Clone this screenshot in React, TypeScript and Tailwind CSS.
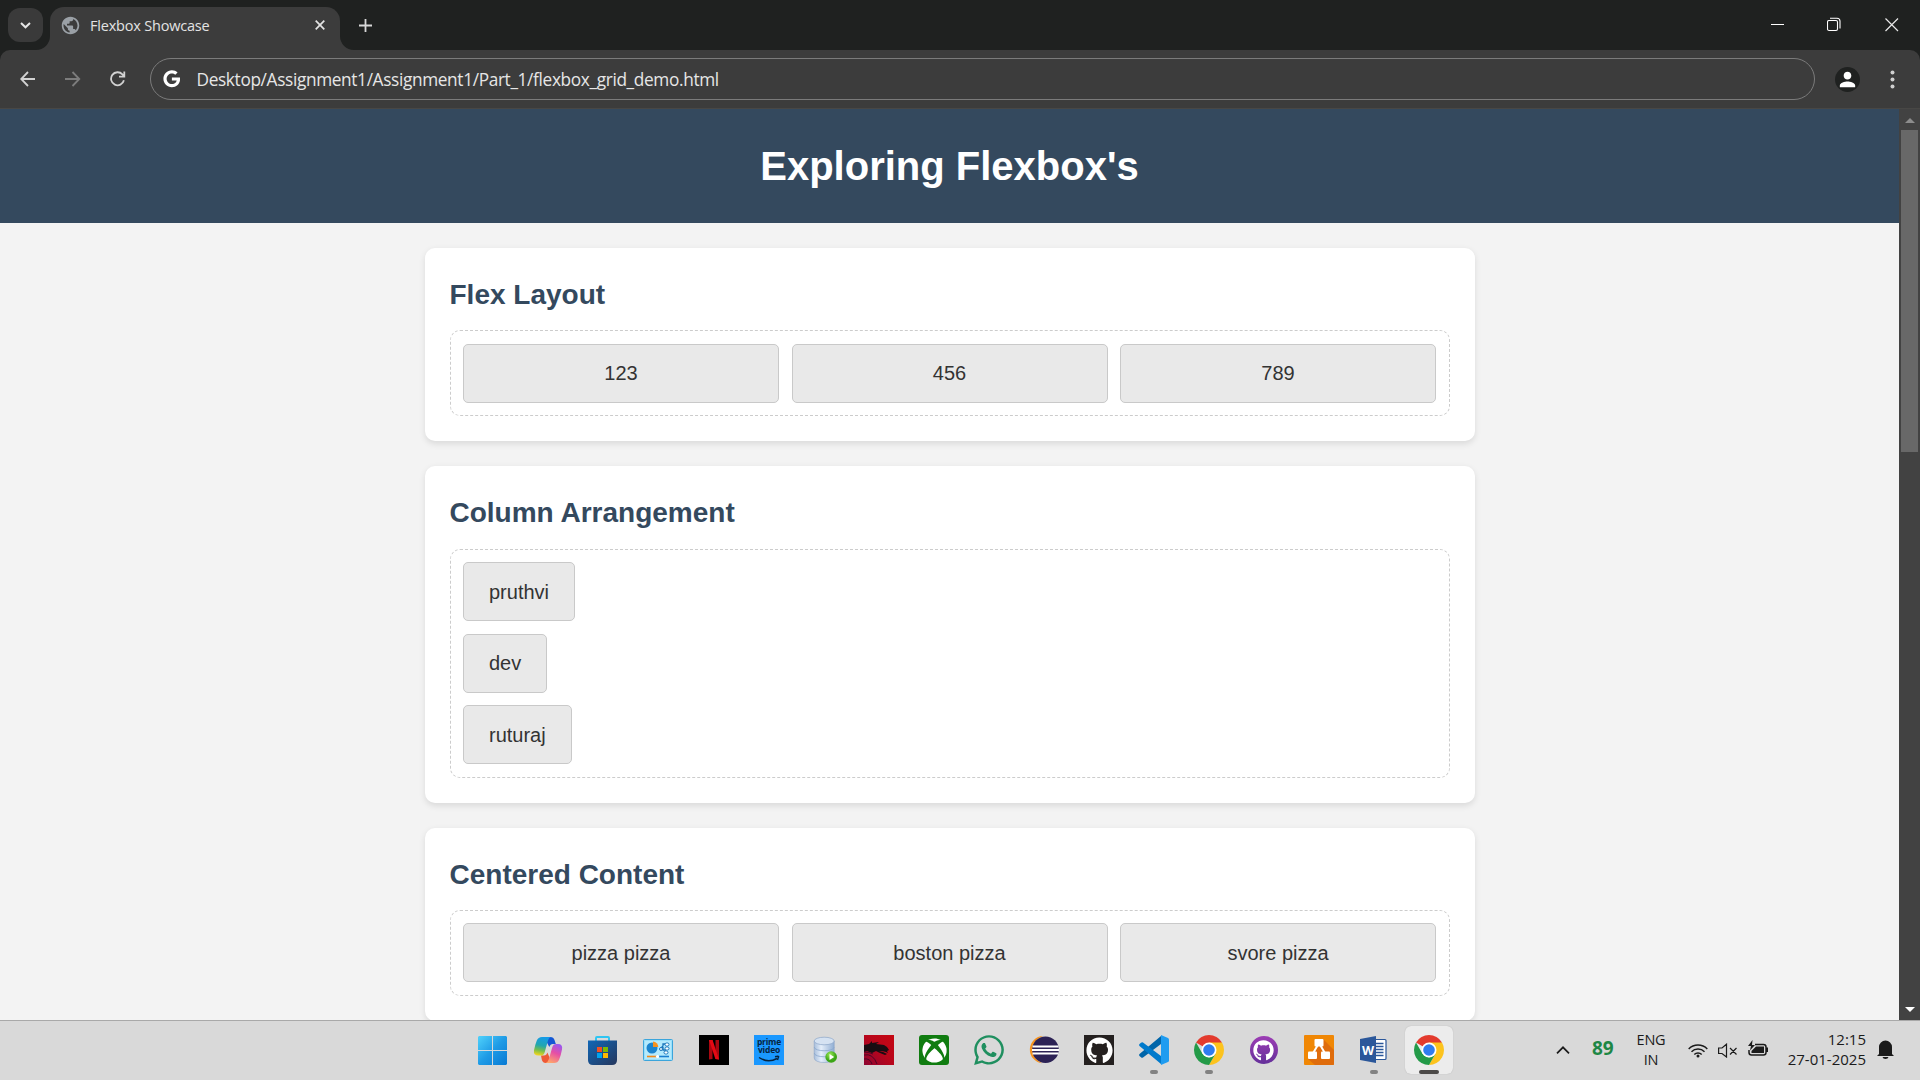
import type { ReactNode } from "react";
import { MdPublic, MdPerson } from "react-icons/md";
import { FaGoogle, FaGithub, FaXbox, FaWhatsapp } from "react-icons/fa";

const ui = "font-['Open_Sans','Noto_Sans',sans-serif]";

function TitleBar() {
  return (
    <div className="flex h-[50px] items-start bg-[#1f2120]">
      <div className="mt-2 ml-2 flex h-[34px] w-[35px] items-center justify-center rounded-xl bg-[#3a3a3a]">
        <svg width="11" height="7" viewBox="0 0 11 7" fill="none" stroke="#e6e6e6" strokeWidth="2">
          <path d="M1 1l4.5 4.3L10 1" />
        </svg>
      </div>
      <div className={`relative mt-[7px] ml-[7px] flex h-[43px] w-[290px] items-center rounded-t-[14px] bg-[#3c3c3c] pb-[7px] pl-[11px] text-[#e3e3e3] ${ui}`}>
        <svg className="absolute bottom-0 -left-[14px]" width="14" height="14">
          <path d="M14 0A14 14 0 0 1 0 14H14Z" fill="#3c3c3c" />
        </svg>
        <svg className="absolute -right-[14px] bottom-0" width="14" height="14">
          <path d="M0 0A14 14 0 0 0 14 14H0Z" fill="#3c3c3c" />
        </svg>
        <MdPublic size={21} color="#9aa0a6" className="-ml-[1.5px]" />
        <span className="mt-[2px] ml-[9.5px] w-[224.5px] text-[14.5px] leading-5 tracking-[-0.2px] whitespace-nowrap">Flexbox Showcase</span>
        <svg width="10" height="10" viewBox="0 0 10 10" stroke="#e3e3e3" strokeWidth="1.7">
          <path d="M.7.7l8.6 8.6M9.3.7L.7 9.3" />
        </svg>
      </div>
      <svg className="mt-[19px] ml-[19px]" width="13" height="13" stroke="#d8d8d8" strokeWidth="1.8">
        <path d="M6.5 0V13M0 6.5H13" />
      </svg>
      <div className="mt-[17px] mr-[21px] ml-auto flex items-center">
        <svg width="14" height="15" stroke="#fff">
          <path d="M0 7.5H13" />
        </svg>
        <svg className="ml-[42px]" width="14" height="15" fill="none" stroke="#fff" strokeWidth="1.1">
          <rect x=".5" y="3.5" width="10" height="10" rx="1.5" />
          <path d="M3 1.2H10a3 3 0 0 1 3 3V11.5" />
        </svg>
        <svg className="ml-[44px]" width="14" height="15" stroke="#e8e8e8" strokeWidth="1.2">
          <path d="M.5 1.5l12.5 12.5M13 1.5L.5 14" />
        </svg>
      </div>
    </div>
  );
}

function Toolbar() {
  return (
    <div className="bg-[#1f2120]">
      <div className="flex h-[59px] items-center rounded-t-[10px] border-b border-[#484745] bg-[#3c3c3c] pr-[25px] pl-5">
        <svg width="16" height="16" viewBox="0 0 16 16" fill="none" stroke="#d2d2d2" strokeWidth="1.8">
          <path d="M15 8H1.5M8 1L1.2 8 8 15" />
        </svg>
        <svg className="ml-[29px]" width="16" height="16" viewBox="0 0 16 16" fill="none" stroke="#7c7c7c" strokeWidth="1.8">
          <path d="M0 8h13.5M7.500 1l6.800 7-6.800 7" />
        </svg>
        <svg className="ml-[29px]" width="16" height="16" viewBox="0 0 16 16" fill="none" stroke="#d2d2d2" strokeWidth="1.8">
          <path d="M13.900 9.300A6.500 6.500 0 1 1 12.400 3.400L14.300 5.500M14.300.5V5.700H9" />
        </svg>
        <div className={`ml-6 flex h-[42px] w-[1665px] items-center rounded-full border border-[#7b7b7b] pl-3 text-[#e6e6e6] ${ui}`}>
          <FaGoogle size={17.500} color="#fff" className="-ml-[0.5px]" />
          <span className="mt-[2px] ml-[16.5px] text-[17.25px] leading-6 tracking-[-0.35px] whitespace-nowrap">
            Desktop/Assignment1/Assignment1/Part_1/flexbox_grid_demo.html
          </span>
        </div>
        <div className="ml-5 flex size-[25px] items-center justify-center rounded-full bg-[#1f2120]">
          <MdPerson size={23} color="#fff" className="shrink-0" />
        </div>
        <svg className="ml-auto" width="5" height="19" fill="#d0d0d0">
          <circle cx="2.500" cy="2.500" r="2" />
          <circle cx="2.500" cy="9.500" r="2" />
          <circle cx="2.500" cy="16.500" r="2" />
        </svg>
      </div>
    </div>
  );
}

function Card({ title, children }: { title: string; children: ReactNode }) {
  return (
    <section className="mx-auto mt-[25px] w-[1050px] rounded-[10px] bg-white p-[25px] shadow-[0_2.5px_6px_rgba(0,0,0,0.1)]">
      <h2 className="mb-[12.5px] text-[28px] leading-[44.8px] font-bold text-[#34495e]">{title}</h2>
      {children}
    </section>
  );
}

const box = "rounded-[5px] border border-[#c9c9c9] bg-[#e9e9e9] px-[25px] py-[12.5px] leading-8";

function Row({ items }: { items: string[] }) {
  return (
    <div className="flex gap-[12.5px] rounded-[10px] border border-dashed border-[#ccc] p-[12.5px]">
      {items.map((t) => (
        <div key={t} className={`flex-1 text-center ${box}`}>{t}</div>
      ))}
    </div>
  );
}

function Column({ items }: { items: string[] }) {
  return (
    <div className="flex flex-col items-start gap-[12.5px] rounded-[10px] border border-dashed border-[#ccc] p-[12.5px]">
      {items.map((t) => (
        <div key={t} className={box}>{t}</div>
      ))}
    </div>
  );
}

function Scrollbar() {
  return (
    <div className="flex h-full w-[21px] flex-col items-center bg-[#424242]">
      <svg className="mt-[9px]" width="10" height="5" fill="#8c8c8c"><path d="M5 0l5 5H0Z" /></svg>
      <div className="mt-[7px] h-[322px] w-[17px] bg-[#686868]" />
      <svg className="mt-auto mb-2" width="10" height="5" fill="#fff"><path d="M0 0H10L5 5Z" /></svg>
    </div>
  );
}

function Svg({ children }: { children: ReactNode }) {
  return <svg width="30" height="30" viewBox="0 0 30 30" className="overflow-visible">{children}</svg>;
}

const WindowsIcon = () => (
  <Svg>
    <defs>
      <linearGradient id="win" gradientUnits="userSpaceOnUse" x1="-1" y1="1" x2="28" y2="30">
        <stop stopColor="#50d2fb" /><stop offset=".5" stopColor="#1f9be6" /><stop offset="1" stopColor="#0879d3" />
      </linearGradient>
    </defs>
    <path fill="url(#win)" d="M0 1H13V15H-1V2ZM14 1H27L28 2V15H14ZM-1 16H13V30H0L-1 29ZM14 16H28V29L27 30H14Z" />
  </Svg>
);

const CopilotIcon = () => (
  <Svg>
    <defs>
      <linearGradient id="cpa" x1=".5" y1="0" x2=".3" y2="1">
        <stop stopColor="#169be8" /><stop offset=".45" stopColor="#21a6b0" /><stop offset=".72" stopColor="#75bd4d" /><stop offset="1" stopColor="#f5d51c" />
      </linearGradient>
      <linearGradient id="cpb" x1=".7" y1="0" x2=".3" y2="1">
        <stop stopColor="#9b58ee" /><stop offset=".45" stopColor="#e64fa5" /><stop offset="1" stopColor="#ffa76b" />
      </linearGradient>
    </defs>
    <path fill="#1557d4" d="M10 2h6.500q3 0 4 3l1.300 4h-3q-2.500 0-3.500 3Z" />
    <path fill="#ee5936" d="M18 28h-6.500q-2.600 0-3.600-3L7 20.500h3q2.500 0 3.400-3Z" />
    <path fill="url(#cpa)" d="M8 2h9q-2.200.5-3 3.400l-3.400 12Q9.700 20.500 7 20.500H4.500Q-.8 20.500 0 15.300 1 10 2.800 5.500 4.200 2 8 2Z" />
    <path fill="url(#cpb)" d="M20 28h-8.500q2.500-.8 3.400-4l3.300-11.600Q19.200 9 22 9h2q5 0 4 5.500-1 5.500-2.800 10Q23.800 28 20 28Z" />
  </Svg>
);

const StoreIcon = () => (
  <Svg>
    <defs>
      <linearGradient id="st" x1="0" y1="0" x2="1" y2="1"><stop stopColor="#1067b6" /><stop offset="1" stopColor="#26375d" /></linearGradient>
    </defs>
    <path fill="none" stroke="#2fc5f2" strokeWidth="2" d="M7 6V3q0-1 1-1H19q1 0 1 1V6" />
    <path fill="url(#st)" d="M-1 5.500H28V25q0 5-5 5H4q-5 0-5-5Z" />
    <path fill="#f25022" d="M8 12h5v5H8z" /><path fill="#7fba00" d="M14 12h5v5h-5z" />
    <path fill="#00a4ef" d="M8 18h5v5H8z" /><path fill="#ffb900" d="M14 18h5v5h-5z" />
  </Svg>
);

const ControlPanelIcon = () => (
  <Svg>
    <rect x="-.5" y="4.500" width="29" height="21" rx="1" fill="#9ae0fb" stroke="#3ca5db" />
    <rect x="1" y="6" width="26" height="18" fill="#b4eafd" />
    <circle cx="8" cy="13" r="5.500" fill="#1a84cf" />
    <path d="M9 12V6.500A5.500 5.500 0 0 1 14.300 12Z" fill="#f6921e" />
    <path d="M16 14l3-3v-2h3M19 12v3h3" stroke="#1975bb" fill="none" strokeWidth="1.300" />
    <g fill="#fff" stroke="#1975bb"><circle cx="17" cy="14" r="1.500" /><rect x="21" y="8" width="4" height="3" rx="1.500" /><rect x="21" y="12" width="4" height="3" rx="1.500" /><rect x="20" y="16" width="4" height="3" rx="1.500" /></g>
    <path d="M3 21.500H13" stroke="#f28a1b" strokeWidth="1.600" /><path d="M15 21.500H25" stroke="#1a7fd0" strokeWidth="1.600" />
    <circle cx="13.500" cy="21.500" r="1.600" fill="#fff" />
  </Svg>
);

const NetflixIcon = () => (
  <Svg>
    <path fill="#000" d="M0 0h30v30H0z" />
    <path fill="#a80710" d="M10 5h3.500v19L10 24.500ZM16.500 5H20v19.500l-3.500-.5Z" />
    <path fill="#e50914" d="M10 5h3.600L20 24.500l-3.600-.5Z" />
  </Svg>
);

const PrimeIcon = () => (
  <div className="flex size-[30px] flex-col items-center bg-[#1a98ff] pt-[3px] font-['Open_Sans'] text-[8.500px] leading-[8px] font-bold tracking-[-0.2px] text-[#06243f]">
    <span>prime</span>
    <span>video</span>
    <svg className="mt-px" width="22" height="7" viewBox="0 0 22 7" fill="none" stroke="#06243f" strokeWidth="1.500">
      <path d="M1 2.500Q10 8.500 19 3.500M17 1.800q4-1 3.500.2T19.500 5" />
    </svg>
  </div>
);

const DatabaseIcon = () => (
  <Svg>
    <defs>
      <linearGradient id="db"><stop stopColor="#a9bfdc" /><stop offset=".35" stopColor="#e4eefa" /><stop offset="1" stopColor="#91aed3" /></linearGradient>
      <radialGradient id="pl" cx=".4" cy=".3"><stop stopColor="#9bea57" /><stop offset="1" stopColor="#3ba516" /></radialGradient>
    </defs>
    <g transform="translate(.7 0)">
      <path fill="url(#db)" stroke="#8ba5c7" strokeWidth=".6" d="M4.500 6v17c0 6 20 6 20 0V6" />
      <path fill="none" stroke="#8aa7cd" strokeWidth=".8" d="M4.500 12c0 5 20 5 20 0M4.500 18c0 5 20 5 20 0" />
      <ellipse cx="14.500" cy="6" rx="10" ry="3.800" fill="#d5e2f2" stroke="#8ba5c7" strokeWidth=".7" />
      <circle cx="21.500" cy="22" r="5.800" fill="url(#pl)" /><path d="M19.800 19v6l4.700-3Z" fill="#fff" />
    </g>
  </Svg>
);

const DragonIcon = () => (
  <Svg>
    <defs>
      <linearGradient id="dr" x1="0" y1="1" x2="1" y2="0"><stop stopColor="#8d0532" /><stop offset=".5" stopColor="#b8061c" /><stop offset="1" stopColor="#c50712" /></linearGradient>
    </defs>
    <path fill="url(#dr)" d="M0 0h30v30H0z" />
    <path fill="#180d12" d="M0 10l5-1 3-3 0 2 7-1-3 2 8 1 3 2 2 3-2 1 1 2-2-1-4-1-3 0 4 1 4 2-2 1-5-2-4-2-4 2-5-2-3 1Z" />
    <path fill="none" stroke="#4c0625" d="M0 20q9-2 13 9M0 24q6-1 8 5M0 17q5 0 9 2" />
  </Svg>
);

const XboxIcon = () => (
  <div className="flex size-[30px] items-center justify-center rounded-[3px] bg-[#107c10]">
    <FaXbox size={25} color="#fff" />
  </div>
);

const EclipseIcon = () => (
  <Svg>
    <path fill="#f7941e" d="M14 1A13.700 13.700 0 0 0 13 28.300Q4 24 4 14.500T14 1Z" />
    <circle cx="16.500" cy="14.700" r="13.300" fill="#2c2255" />
    <path stroke="#fff" strokeWidth="1.800" d="M3.500 11.500H29.500M3 15H30M3.500 18.500H29.500" />
  </Svg>
);

const GithubSquare = () => (
  <div className="flex size-[30px] items-center justify-center bg-[#24201f]"><FaGithub size={27} color="#fff" /></div>
);

const VSCodeIcon = () => (
  <Svg>
    <path fill="#0065a9" d="M22 1V9L4 22.500Q3 23.200 2 22.300L.5 21q-1-1 0-2Z" />
    <path fill="#007acc" d="M22 29V21L4 7.500Q3 6.800 2 7.700L.5 9q-1 1 0 2Z" />
    <path fill="#1f9cf0" d="M22 0l7 3q1 .5 1 1.500v21q0 1-1 1.500l-7 3Z" />
  </Svg>
);

const ChromeIcon = () => (
  <Svg>
    <path fill="#e33b2e" d="M15 15L2.010 7.500A15 15 0 0 1 27.990 7.500Z" />
    <path fill="#fcc31e" d="M15 15V7.500H27.990A15 15 0 0 1 15 30L21.500 18.750Z" />
    <path fill="#239a48" d="M2.010 7.500L8.500 18.750 15 22.500 21.500 18.750 15 30A15 15 0 0 1 2.010 7.500Z" />
    <circle cx="15" cy="15" r="7.500" fill="#fff" /><circle cx="15" cy="15" r="5.800" fill="#2f7cf0" />
  </Svg>
);

const GithubDesktop = () => (
  <div className="mr-px flex size-[28px] items-center justify-center rounded-full bg-linear-to-b from-[#9c3cb4] to-[#65309a]">
    <FaGithub size={21} color="#fff" />
  </div>
);

const DrawioIcon = () => (
  <Svg>
    <rect width="30" height="30" rx="1" fill="#f08705" />
    <path fill="#df6c0c" d="M19 4L30 15V29q0 1-1 1H11L4 24 14 12Z" />
    <path d="M15 8L8 20M15 8l7 12" stroke="#fff" strokeWidth="2" />
    <g fill="#fff"><rect x="10.500" y="4" width="9" height="7.500" rx="1" /><rect x="4" y="16.500" width="9" height="7.500" rx="1" /><rect x="17" y="16.500" width="9" height="7.500" rx="1" /></g>
  </Svg>
);

const WordIcon = () => (
  <Svg>
    <rect x="15" y="4.500" width="12" height="20" rx="1" fill="#fff" stroke="#2b579a" strokeWidth="1.200" />
    <path stroke="#2b579a" strokeWidth="1.400" d="M17 8.500h7.500M17 11.500h7.500M17 14.500h7.500M17 17.500h7.500M17 20.500h7.500" />
    <path fill="#2b579a" d="M1 4L17 1V28L1 25Z" />
    <text x="9" y="19.500" textAnchor="middle" fill="#fff" fontSize="12.500" fontWeight="700" fontFamily="Open Sans">W</text>
  </Svg>
);

const apps: { name: string; icon: ReactNode; state?: "open" | "active" }[] = [
  { name: "start", icon: <WindowsIcon /> },
  { name: "copilot", icon: <CopilotIcon /> },
  { name: "store", icon: <StoreIcon /> },
  { name: "control", icon: <ControlPanelIcon /> },
  { name: "netflix", icon: <NetflixIcon /> },
  { name: "prime", icon: <PrimeIcon /> },
  { name: "database", icon: <DatabaseIcon /> },
  { name: "dragon", icon: <DragonIcon /> },
  { name: "xbox", icon: <XboxIcon /> },
  { name: "whatsapp", icon: <FaWhatsapp size={34} color="#1f8f5f" className="shrink-0" /> },
  { name: "eclipse", icon: <EclipseIcon /> },
  { name: "github", icon: <GithubSquare /> },
  { name: "vscode", icon: <VSCodeIcon />, state: "open" },
  { name: "chrome", icon: <ChromeIcon />, state: "open" },
  { name: "desktop", icon: <GithubDesktop /> },
  { name: "drawio", icon: <DrawioIcon /> },
  { name: "word", icon: <WordIcon />, state: "open" },
  { name: "chrome-active", icon: <ChromeIcon />, state: "active" },
];

function Taskbar() {
  return (
    <div className={`flex h-[60px] items-start border-t border-[#a9a9a9] bg-[#d9d9d9] pt-[5px] text-[#1b1b1b] ${ui}`}>
      <div className="ml-[470px] flex gap-[7px]">
        {apps.map((a) => (
          <div
            key={a.name}
            className={`relative flex size-12 items-center justify-center rounded-md ${a.state === "active" ? "bg-[#ececec] shadow-[0_0_1px_#aaa]" : ""}`}
          >
            {a.icon}
            {a.state && (
              <div className={`absolute bottom-0 h-1 rounded-full ${a.state === "active" ? "w-5 bg-[#4c4a48]" : "w-2 bg-[#828282]"}`} />
            )}
          </div>
        ))}
      </div>
      <div className="ml-[103px] flex h-12 items-center">
        <svg width="14" height="8" fill="none" stroke="#1b1b1b" strokeWidth="1.700"><path d="M1 7.300L7 1.300l6 6" /></svg>
        <span className="-mt-[4px] ml-[22px] w-[22px] text-[19px] leading-6 font-bold text-[#1e8745]">89</span>
        <div className="ml-[17px] w-10 text-center text-[14.500px] leading-5 tracking-[-0.2px]">
          <div>ENG</div>
          <div>IN</div>
        </div>
        <svg className="ml-[17px]" width="20" height="15" fill="none" stroke="#1b1b1b" strokeWidth="1.500">
          <path d="M.7 6a13 13 0 0 1 18.600 0M3.500 8.800a9.200 9.200 0 0 1 13 0M6.300 11.500a5.200 5.200 0 0 1 7.400 0" />
          <circle cx="10" cy="13" r="1.500" fill="#1b1b1b" stroke="none" />
        </svg>
        <svg className="ml-[10px]" width="20" height="15" fill="none" stroke="#1b1b1b" strokeWidth="1.200">
          <path d="M.6 5V10.500H4L8.500 14V1.200L4 5ZM12 5l6.500 6.500M18.500 5L12 11.500" />
        </svg>
        <svg className="-mt-[3px] ml-[10px]" width="21" height="17" fill="none" stroke="#1b1b1b" strokeWidth="1.500">
          <path d="M7 4.500h8.500q2.500 0 2.500 2.500v5.500q0 2.500-2.500 2.500H3.500Q1 15 1 12.500V10" />
          <path d="M8 6.500h8v6.500H3.500V11Z" fill="#1b1b1b" stroke="none" />
          <path d="M4.500 0L0 6h3L2 10.500 7 5H4Z" fill="#1b1b1b" stroke="none" />
          <path d="M19 7.500v4.500" strokeWidth="2" />
        </svg>
        <div className="-mt-[3px] ml-[6px] w-[91px] text-right text-[15px] leading-5 whitespace-nowrap">
          <div>12:15</div>
          <div>27-01-2025</div>
        </div>
        <svg className="ml-[11px]" width="17" height="20" fill="#1b1b1b">
          <path d="M2 14V7a6.300 6.300 0 0 1 13 0v7l2 2H0ZM5.500 17h6q-.5 2-3 2t-3-2Z" />
        </svg>
      </div>
    </div>
  );
}

export default function App() {
  return (
    <div className="flex h-[1080px] w-[1920px] flex-col overflow-hidden">
      <TitleBar />
      <Toolbar />
      <div className="flex h-[911px] overflow-hidden">
        <main className="w-[1899px] overflow-hidden bg-[#f3f3f3] font-['Liberation_Sans',Arial,sans-serif] text-[20px] text-[#333]">
          <h1 className="bg-[#34495e] py-[25px] text-center text-[40px] leading-[64px] font-bold text-white">Exploring Flexbox's</h1>
          <Card title="Flex Layout"><Row items={["123", "456", "789"]} /></Card>
          <Card title="Column Arrangement"><Column items={["pruthvi", "dev", "ruturaj"]} /></Card>
          <Card title="Centered Content"><Row items={["pizza pizza", "boston pizza", "svore pizza"]} /></Card>
        </main>
        <Scrollbar />
      </div>
      <Taskbar />
    </div>
  );
}
